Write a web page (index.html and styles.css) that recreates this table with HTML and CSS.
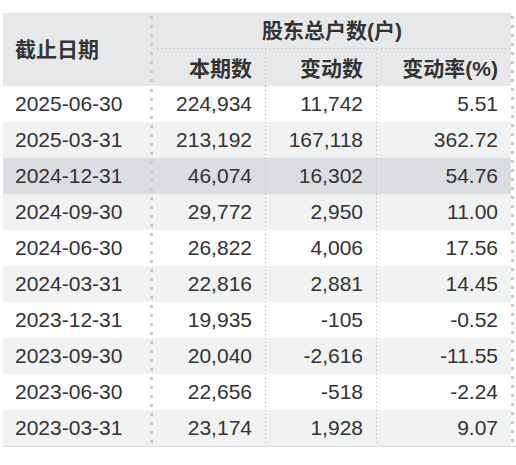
FILE: index.html
```html
<!DOCTYPE html>
<html lang="zh-CN">
<head>
<meta charset="utf-8">
<title>股东户数</title>
<link rel="stylesheet" href="styles.css">
</head>
<body>
<div class="wrap">
<table class="tbl">
<colgroup>
<col class="c1"><col class="c2"><col class="c3"><col class="c4">
</colgroup>
<thead>
<tr class="h1">
<th class="date-h" rowspan="2">截止日期</th>
<th class="group" colspan="3">股东总户数(户)</th>
</tr>
<tr class="h2">
<th class="num">本期数</th>
<th class="num sep">变动数</th>
<th class="num sep">变动率(%)</th>
</tr>
</thead>
<tbody>
<tr><td class="date">2025-06-30</td><td class="num">224,934</td><td class="num sep">11,742</td><td class="num sep">5.51</td></tr>
<tr class="alt"><td class="date">2025-03-31</td><td class="num">213,192</td><td class="num sep">167,118</td><td class="num sep">362.72</td></tr>
<tr class="hl"><td class="date">2024-12-31</td><td class="num">46,074</td><td class="num sep">16,302</td><td class="num sep">54.76</td></tr>
<tr class="alt"><td class="date">2024-09-30</td><td class="num">29,772</td><td class="num sep">2,950</td><td class="num sep">11.00</td></tr>
<tr><td class="date">2024-06-30</td><td class="num">26,822</td><td class="num sep">4,006</td><td class="num sep">17.56</td></tr>
<tr class="alt"><td class="date">2024-03-31</td><td class="num">22,816</td><td class="num sep">2,881</td><td class="num sep">14.45</td></tr>
<tr><td class="date">2023-12-31</td><td class="num">19,935</td><td class="num sep">-105</td><td class="num sep">-0.52</td></tr>
<tr class="alt"><td class="date">2023-09-30</td><td class="num">20,040</td><td class="num sep">-2,616</td><td class="num sep">-11.55</td></tr>
<tr><td class="date">2023-06-30</td><td class="num">22,656</td><td class="num sep">-518</td><td class="num sep">-2.24</td></tr>
<tr class="alt"><td class="date">2023-03-31</td><td class="num">23,174</td><td class="num sep">1,928</td><td class="num sep">9.07</td></tr>
</tbody>
</table>
</div>
</body>
</html>
```
FILE: styles.css
```css
html, body {
  margin: 0;
  padding: 0;
  background: #fff;
}
body {
  font-family: "Liberation Sans", "Noto Sans CJK SC", sans-serif;
  color: #333;
}
.wrap {
  margin: 13px 0 0 3px;
  width: 508px;
  padding-right: 5px;
  border-bottom: 1px solid #dcdcdc;
  background-image: linear-gradient(to bottom, #cacaca 3px, transparent 3px);
  background-size: 3px 9px;
  background-position: 508px 3px;
  background-repeat: repeat-y;
}
.tbl {
  width: 508px;
  table-layout: fixed;
  border-collapse: collapse;
  border-spacing: 0;
  font-size: 21px;
}
.c1 { width: 150px; }
.c2 { width: 112px; }
.c3 { width: 111px; }
.c4 { width: 135px; }

.tbl th, .tbl td {
  box-sizing: border-box;
  padding: 0;
  line-height: 24px;
  white-space: nowrap;
}
.tbl th {
  font-weight: bold;
  background-color: #e7e8ea;
}
.tbl .h1 { height: 36px; }
.tbl .h2 { height: 37px; }
.tbl tbody tr { height: 36px; }

.tbl .date-h, .tbl .date {
  text-align: left;
  padding-left: 12px;
  background-image: linear-gradient(to bottom, #cacaca 3px, transparent 3px);
  background-size: 3px 9px;
  background-position: right 3px;
  background-repeat: repeat-y;
}
.tbl .date-h {
  vertical-align: middle;
}
.tbl .group {
  text-align: center;
  vertical-align: middle;
  background-image: linear-gradient(to right, #b4b4b4 1px, transparent 1px);
  background-size: 4px 1px;
  background-position: left bottom;
  background-repeat: repeat-x;
}
.tbl .num {
  text-align: right;
  padding-right: 13px;
}
.tbl .h2 .num {
  vertical-align: middle;
  padding-top: 3px;
}
.tbl .sep {
  background-image: linear-gradient(to bottom, #b8b8b8 1px, transparent 1px);
  background-size: 1px 4px;
  background-position: left top;
  background-repeat: repeat-y;
}
.tbl tbody td {
  background-color: #fff;
}
.tbl tbody tr.alt td {
  background-color: #f1f2f2;
}
.tbl tbody tr.hl td {
  background-color: #dcdde0;
}
```
